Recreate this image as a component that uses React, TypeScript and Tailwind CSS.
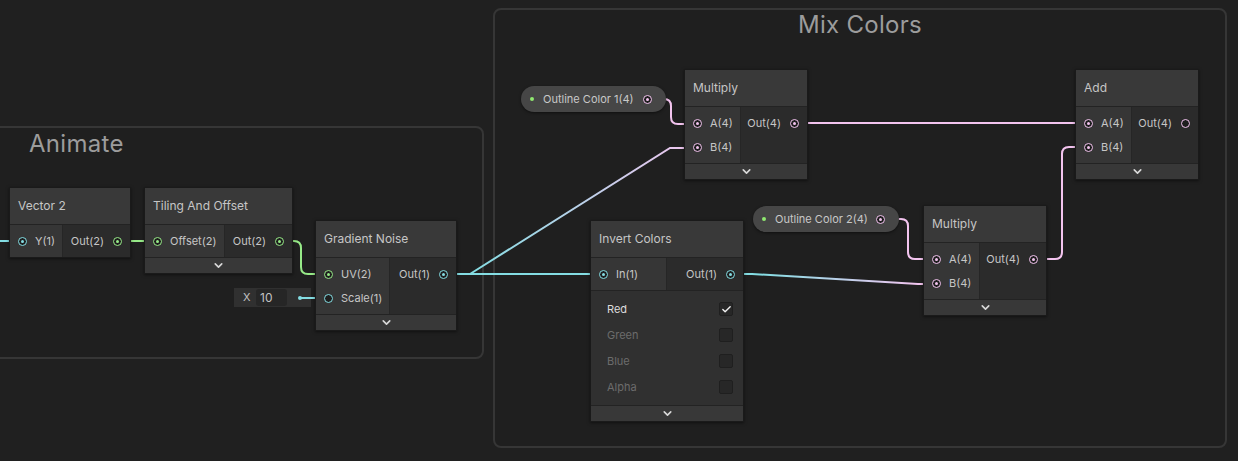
import React from 'react';
import { ChevronDown, Check } from 'lucide-react';

const PINK = '#f3c4ef';
const CYAN = '#84dde3';
const GREEN = '#97ea88';

type Port = { label: string; color: string; connected?: boolean };

interface NodeProps {
  x: number;
  y: number;
  w: number;
  inW: number;
  title: string;
  inputs: Port[];
  outputs: Port[];
  collapse?: boolean;
  children?: React.ReactNode;
}

function PortDot({ color, connected = true }: { color: string; connected?: boolean }) {
  return (
    <span
      className="w-[9px] h-[9px] rounded-full border-[1.5px] flex items-center justify-center shrink-0 bg-[#1e1e1e]"
      style={{ borderColor: color }}
    >
      {connected && <span className="w-[3px] h-[3px] rounded-full" style={{ background: color }} />}
    </span>
  );
}

function Node({ x, y, w, inW, title, inputs, outputs, collapse = true, children }: NodeProps) {
  const rows = Math.max(inputs.length, outputs.length);
  return (
    <div
      className="absolute border border-[#1a1a1a] text-[#c6c6c6] shadow-[0_1px_3px_rgba(0,0,0,0.5)]"
      style={{ left: x - 1, top: y - 1, width: w + 2 }}
    >
      <div className="h-[37px] bg-[#393939] flex items-center px-2 text-[12px] border-b border-[#232323]">{title}</div>
      <div className="flex text-[11px]" style={{ height: rows * 24 + 8 }}>
        <div className="bg-[#363636] pt-1 border-r border-[#262626]" style={{ width: inW }}>
          {inputs.map((p) => (
            <div key={p.label} className="h-6 flex items-center pl-[8px] gap-[8px]">
              <PortDot color={p.color} connected={p.connected} />
              <span>{p.label}</span>
            </div>
          ))}
        </div>
        <div className="flex-1 bg-[#2b2b2b] pt-1">
          {outputs.map((p) => (
            <div key={p.label} className="h-6 flex items-center justify-end pr-[8px] gap-[9px]">
              <span>{p.label}</span>
              <PortDot color={p.color} connected={p.connected} />
            </div>
          ))}
        </div>
      </div>
      {children}
      {collapse && (
        <div className="h-4 bg-[#383838] border-t border-[#232323] flex items-center justify-center">
          <ChevronDown size={13} strokeWidth={3} color="#d8d8d8" />
        </div>
      )}
    </div>
  );
}

function Pill({ x, y, w, label }: { x: number; y: number; w: number; label: string }) {
  return (
    <div
      className="absolute h-[26px] rounded-full bg-[#464646] flex items-center pl-[9px] pr-[14px] text-[11px] text-[#c8c8c8] shadow-[0_1px_3px_rgba(0,0,0,0.5)]"
      style={{ left: x, top: y, width: w }}
    >
      <span className="w-1 h-1 rounded-full bg-[#8fe870] mr-[9px]" />
      <span className="flex-1">{label}</span>
      <PortDot color={PINK} />
    </div>
  );
}

function Prop({ label, checked }: { label: string; checked?: boolean }) {
  return (
    <div className="h-[26px] flex items-center justify-between pl-4 pr-[10px]">
      <span className={checked ? 'text-[#dcdcdc]' : 'text-[#6c6c6c]'}>{label}</span>
      <span className="w-[14px] h-[14px] rounded-[2px] bg-[#272727] border border-[#1f1f1f] flex items-center justify-center">
        {checked && <Check size={11} strokeWidth={3} color="#f0f0f0" />}
      </span>
    </div>
  );
}

export default function App() {
  return (
    <div className="relative w-[1238px] h-[461px] overflow-hidden bg-[#202020] font-['Inter','Noto_Sans',sans-serif]">
      {/* groups */}
      <div className="absolute left-[-10px] top-[126px] w-[494px] h-[233px] rounded-lg border-2 border-[#363636] bg-[#1f1f1f]">
        <div className="ml-[37px] mt-[-2px] text-[24px] tracking-[0.3px] text-[#9c9c9c]">Animate</div>
      </div>
      <div className="absolute left-[493px] top-[8px] w-[734px] h-[440px] rounded-lg border-2 border-[#363636] bg-[#1f1f1f]">
        <div className="text-center mt-[-3px] text-[24px] tracking-[0.3px] text-[#9c9c9c]">Mix Colors</div>
      </div>

      {/* inline value field */}
      <div className="absolute left-[234px] top-[288px] w-[77px] h-[19px] bg-[#303030] flex items-center text-[11px] text-[#c2c2c2]">
        <span className="ml-[9px] w-[13px]">X</span>
        <span className="w-[31px] h-[17px] bg-[#262626] rounded-[3px] flex items-center pl-[4px] text-[12px]">10</span>
        <span className="ml-[11px] w-1 h-1 rounded-full" style={{ background: CYAN }} />
      </div>

      {/* wires */}
      <svg className="absolute inset-0" width="1238" height="461" fill="none" strokeWidth="2">
        <defs>
          <linearGradient id="cp1" gradientUnits="userSpaceOnUse" x1="470" y1="0" x2="697" y2="0">
            <stop offset="0" stopColor={CYAN} />
            <stop offset="1" stopColor={PINK} />
          </linearGradient>
          <linearGradient id="cp2" gradientUnits="userSpaceOnUse" x1="760" y1="0" x2="920" y2="0">
            <stop offset="0" stopColor={CYAN} />
            <stop offset="1" stopColor={PINK} />
          </linearGradient>
        </defs>
        <path d="M0 241 H22" stroke={CYAN} />
        <path d="M118 241 H157" stroke={GREEN} />
        <path d="M280 241 H294 Q301 241 301 248 V267 Q301 274 308 274 H328" stroke={GREEN} />
        <path d="M300 298 H328" stroke={CYAN} />
        <path d="M444 274 H603" stroke={CYAN} />
        <path d="M470 274 L670 148 H697" stroke="url(#cp1)" />
        <path d="M731 274 H752 L918 284 H936" stroke="url(#cp2)" />
        <path d="M646 99 H664 Q671 99 671 106 V117 Q671 124 678 124 H697" stroke={PINK} />
        <path d="M795 123 H1088" stroke={PINK} />
        <path d="M880 219 H901 Q908 219 908 226 V252 Q908 259 915 259 H936" stroke={PINK} />
        <path d="M1034 259 H1055 Q1062 259 1062 252 V154 Q1062 147 1069 147 H1088" stroke={PINK} />
      </svg>

      <Node x={10} y={188} w={120} inW={53} title="Vector 2" collapse={false}
        inputs={[{ label: 'Y(1)', color: CYAN }]} outputs={[{ label: 'Out(2)', color: GREEN }]} />
      <Node x={145} y={188} w={147} inW={80} title="Tiling And Offset"
        inputs={[{ label: 'Offset(2)', color: GREEN }]} outputs={[{ label: 'Out(2)', color: GREEN }]} />
      <Node x={316} y={221} w={140} inW={74} title="Gradient Noise"
        inputs={[{ label: 'UV(2)', color: GREEN }, { label: 'Scale(1)', color: CYAN, connected: false }]}
        outputs={[{ label: 'Out(1)', color: CYAN }]} />

      <Node x={591} y={221} w={152} inW={76} title="Invert Colors"
        inputs={[{ label: 'In(1)', color: CYAN }]} outputs={[{ label: 'Out(1)', color: CYAN }]}>
        <div className="bg-[#303030] border-t border-[#232323] pt-[5px] pb-[5px] text-[11px]">
          <Prop label="Red" checked />
          <Prop label="Green" />
          <Prop label="Blue" />
          <Prop label="Alpha" />
        </div>
      </Node>

      <Pill x={521} y={86} w={145} label="Outline Color 1(4)" />
      <Node x={685} y={70} w={122} inW={56} title="Multiply"
        inputs={[{ label: 'A(4)', color: PINK }, { label: 'B(4)', color: PINK }]}
        outputs={[{ label: 'Out(4)', color: PINK }]} />
      <Node x={1076} y={70} w={122} inW={56} title="Add"
        inputs={[{ label: 'A(4)', color: PINK }, { label: 'B(4)', color: PINK }]}
        outputs={[{ label: 'Out(4)', color: PINK, connected: false }]} />
      <Pill x={753} y={206} w={146} label="Outline Color 2(4)" />
      <Node x={924} y={206} w={122} inW={56} title="Multiply"
        inputs={[{ label: 'A(4)', color: PINK }, { label: 'B(4)', color: PINK }]}
        outputs={[{ label: 'Out(4)', color: PINK }]} />
    </div>
  );
}
